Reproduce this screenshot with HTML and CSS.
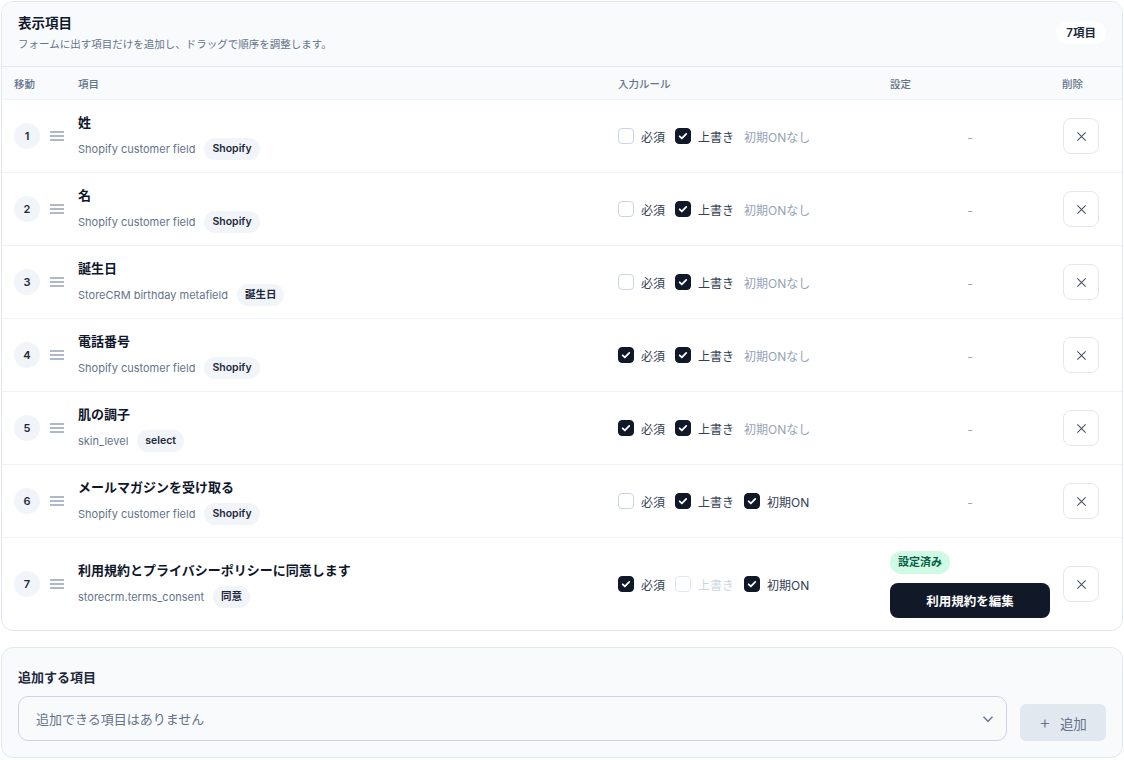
FILE: index.html
```html
<!DOCTYPE html>
<html lang="ja">
<head>
    <meta charset="UTF-8">
    <meta name="viewport" content="width=device-width, initial-scale=1.0">
    <title>表示項目</title>
    <link rel="stylesheet" href="styles.css">
</head>
<body>
    <div class="panel">
        <div class="panel-head">
            <div>
                <h2>表示項目</h2>
                <p>フォームに出す項目だけを追加し、ドラッグで順序を調整します。</p>
            </div>
            <span class="count">7項目</span>
        </div>

        <div class="row head-row">
            <div>移動</div>
            <div>項目</div>
            <div>入力ルール</div>
            <div>設定</div>
            <div>削除</div>
        </div>

        <div class="row item">
            <div class="move"><span class="num">1</span><svg class="grip" viewBox="0 0 14 10"><path d="M0 1h14M0 5h14M0 9h14"/></svg></div>
            <div class="field">
                <div class="field-name">姓</div>
                <div class="field-meta"><span>Shopify customer field</span><span class="tag">Shopify</span></div>
            </div>
            <div class="rules">
                <label class="rule"><span class="box"></span>必須</label>
                <label class="rule"><span class="box on"><svg viewBox="0 0 16 16"><path d="M4.2 8.3l2.5 2.5 5-5.2"/></svg></span>上書き</label>
                <span class="note">初期ONなし</span>
            </div>
            <div class="setting"><span class="dash">-</span></div>
            <div><button class="del-btn"><svg viewBox="0 0 12 12"><path d="M1.5 1.5l9 9M10.5 1.5l-9 9"/></svg></button></div>
        </div>

        <div class="row item">
            <div class="move"><span class="num">2</span><svg class="grip" viewBox="0 0 14 10"><path d="M0 1h14M0 5h14M0 9h14"/></svg></div>
            <div class="field">
                <div class="field-name">名</div>
                <div class="field-meta"><span>Shopify customer field</span><span class="tag">Shopify</span></div>
            </div>
            <div class="rules">
                <label class="rule"><span class="box"></span>必須</label>
                <label class="rule"><span class="box on"><svg viewBox="0 0 16 16"><path d="M4.2 8.3l2.5 2.5 5-5.2"/></svg></span>上書き</label>
                <span class="note">初期ONなし</span>
            </div>
            <div class="setting"><span class="dash">-</span></div>
            <div><button class="del-btn"><svg viewBox="0 0 12 12"><path d="M1.5 1.5l9 9M10.5 1.5l-9 9"/></svg></button></div>
        </div>

        <div class="row item">
            <div class="move"><span class="num">3</span><svg class="grip" viewBox="0 0 14 10"><path d="M0 1h14M0 5h14M0 9h14"/></svg></div>
            <div class="field">
                <div class="field-name">誕生日</div>
                <div class="field-meta"><span>StoreCRM birthday metafield</span><span class="tag">誕生日</span></div>
            </div>
            <div class="rules">
                <label class="rule"><span class="box"></span>必須</label>
                <label class="rule"><span class="box on"><svg viewBox="0 0 16 16"><path d="M4.2 8.3l2.5 2.5 5-5.2"/></svg></span>上書き</label>
                <span class="note">初期ONなし</span>
            </div>
            <div class="setting"><span class="dash">-</span></div>
            <div><button class="del-btn"><svg viewBox="0 0 12 12"><path d="M1.5 1.5l9 9M10.5 1.5l-9 9"/></svg></button></div>
        </div>

        <div class="row item">
            <div class="move"><span class="num">4</span><svg class="grip" viewBox="0 0 14 10"><path d="M0 1h14M0 5h14M0 9h14"/></svg></div>
            <div class="field">
                <div class="field-name">電話番号</div>
                <div class="field-meta"><span>Shopify customer field</span><span class="tag">Shopify</span></div>
            </div>
            <div class="rules">
                <label class="rule"><span class="box on"><svg viewBox="0 0 16 16"><path d="M4.2 8.3l2.5 2.5 5-5.2"/></svg></span>必須</label>
                <label class="rule"><span class="box on"><svg viewBox="0 0 16 16"><path d="M4.2 8.3l2.5 2.5 5-5.2"/></svg></span>上書き</label>
                <span class="note">初期ONなし</span>
            </div>
            <div class="setting"><span class="dash">-</span></div>
            <div><button class="del-btn"><svg viewBox="0 0 12 12"><path d="M1.5 1.5l9 9M10.5 1.5l-9 9"/></svg></button></div>
        </div>

        <div class="row item">
            <div class="move"><span class="num">5</span><svg class="grip" viewBox="0 0 14 10"><path d="M0 1h14M0 5h14M0 9h14"/></svg></div>
            <div class="field">
                <div class="field-name">肌の調子</div>
                <div class="field-meta"><span>skin_level</span><span class="tag">select</span></div>
            </div>
            <div class="rules">
                <label class="rule"><span class="box on"><svg viewBox="0 0 16 16"><path d="M4.2 8.3l2.5 2.5 5-5.2"/></svg></span>必須</label>
                <label class="rule"><span class="box on"><svg viewBox="0 0 16 16"><path d="M4.2 8.3l2.5 2.5 5-5.2"/></svg></span>上書き</label>
                <span class="note">初期ONなし</span>
            </div>
            <div class="setting"><span class="dash">-</span></div>
            <div><button class="del-btn"><svg viewBox="0 0 12 12"><path d="M1.5 1.5l9 9M10.5 1.5l-9 9"/></svg></button></div>
        </div>

        <div class="row item">
            <div class="move"><span class="num">6</span><svg class="grip" viewBox="0 0 14 10"><path d="M0 1h14M0 5h14M0 9h14"/></svg></div>
            <div class="field">
                <div class="field-name">メールマガジンを受け取る</div>
                <div class="field-meta"><span>Shopify customer field</span><span class="tag">Shopify</span></div>
            </div>
            <div class="rules">
                <label class="rule"><span class="box"></span>必須</label>
                <label class="rule"><span class="box on"><svg viewBox="0 0 16 16"><path d="M4.2 8.3l2.5 2.5 5-5.2"/></svg></span>上書き</label>
                <label class="rule"><span class="box on"><svg viewBox="0 0 16 16"><path d="M4.2 8.3l2.5 2.5 5-5.2"/></svg></span>初期ON</label>
            </div>
            <div class="setting"><span class="dash">-</span></div>
            <div><button class="del-btn"><svg viewBox="0 0 12 12"><path d="M1.5 1.5l9 9M10.5 1.5l-9 9"/></svg></button></div>
        </div>

        <div class="row item last">
            <div class="move"><span class="num">7</span><svg class="grip" viewBox="0 0 14 10"><path d="M0 1h14M0 5h14M0 9h14"/></svg></div>
            <div class="field">
                <div class="field-name">利用規約とプライバシーポリシーに同意します</div>
                <div class="field-meta"><span>storecrm.terms_consent</span><span class="tag">同意</span></div>
            </div>
            <div class="rules">
                <label class="rule"><span class="box on"><svg viewBox="0 0 16 16"><path d="M4.2 8.3l2.5 2.5 5-5.2"/></svg></span>必須</label>
                <label class="rule disabled"><span class="box"></span>上書き</label>
                <label class="rule"><span class="box on"><svg viewBox="0 0 16 16"><path d="M4.2 8.3l2.5 2.5 5-5.2"/></svg></span>初期ON</label>
            </div>
            <div class="setting stack">
                <span class="done">設定済み</span>
                <button class="edit-btn">利用規約を編集</button>
            </div>
            <div><button class="del-btn"><svg viewBox="0 0 12 12"><path d="M1.5 1.5l9 9M10.5 1.5l-9 9"/></svg></button></div>
        </div>
    </div>

    <div class="add-panel">
        <h3>追加する項目</h3>
        <div class="add-row">
            <div class="select">
                <span>追加できる項目はありません</span>
                <svg class="chev" viewBox="0 0 12 8"><path d="M1.5 1.8l4.5 4.4 4.5-4.4"/></svg>
            </div>
            <button class="add-btn"><span class="plus">+</span>追加</button>
        </div>
    </div>
</body>
</html>
```

FILE: styles.css
```css
body {
    margin: 0;
    padding: 1px;
    background: #ffffff;
    color: #0f172a;
    font-family: Inter, "Noto Sans CJK JP", sans-serif;
}

.panel {
    border: 1px solid #e2e8f0;
    border-radius: 12px;
    background: #ffffff;
    overflow: hidden;
}

.panel-head {
    display: flex;
    justify-content: space-between;
    align-items: center;
    padding: 11px 16px 13px;
    background: #f8fafc;
    border-bottom: 1px solid #e2e8f0;
}
.panel-head h2 {
    margin: 0;
    font-size: 13.5px;
    line-height: 20px;
    font-weight: 700;
    color: #0f172a;
}
.panel-head p {
    margin: 4px 0 0;
    font-size: 10.5px;
    line-height: 16px;
    color: #64748b;
}
.count {
    background: #ffffff;
    border-radius: 999px;
    padding: 0 10px;
    height: 22px;
    line-height: 22px;
    font-size: 11.5px;
    font-weight: 600;
    color: #1e293b;
}

.row {
    display: grid;
    grid-template-columns: 64px 1fr 272px 172px 48px;
    align-items: center;
    padding: 0 12px;
}
.head-row {
    height: 32px;
    background: #f8fafc;
    border-bottom: 1px solid #eef2f6;
    font-size: 10.5px;
    font-weight: 500;
    color: #64748b;
}
.item {
    min-height: 73px;
    box-sizing: border-box;
    padding-top: 12px;
    padding-bottom: 12px;
    border-bottom: 1px solid #eef2f6;
}
.item.last {
    border-bottom: none;
    min-height: 92px;
}

.move {
    display: flex;
    align-items: center;
    gap: 10px;
}
.num {
    width: 26px;
    height: 26px;
    border-radius: 50%;
    background: #f1f5f9;
    display: flex;
    align-items: center;
    justify-content: center;
    font-size: 11px;
    font-weight: 600;
    color: #1e293b;
}
.grip {
    width: 14px;
    height: 10px;
    fill: none;
    stroke: #94a3b8;
    stroke-width: 1.5;
}

.field-name {
    font-size: 13px;
    line-height: 18px;
    font-weight: 700;
    color: #0f172a;
}
.field-meta {
    display: flex;
    align-items: center;
    gap: 9px;
    margin-top: 7px;
    font-size: 11px;
    color: #64748b;
}
.tag {
    height: 22px;
    line-height: 22px;
    padding: 0 8px;
    border-radius: 999px;
    background: #f1f5f9;
    color: #1e293b;
    font-size: 10.5px;
    font-weight: 600;
}

.rules {
    display: flex;
    align-items: center;
    gap: 10px;
    font-size: 12px;
    color: #334155;
}
.rule {
    display: flex;
    align-items: center;
    gap: 7px;
}
.box {
    width: 16px;
    height: 16px;
    box-sizing: border-box;
    border: 1px solid #cbd5e1;
    border-radius: 4px;
    background: #ffffff;
    display: flex;
}
.box.on {
    background: #111827;
    border-color: #111827;
}
.box svg {
    width: 14px;
    height: 14px;
    fill: none;
    stroke: #ffffff;
    stroke-width: 2;
    stroke-linecap: round;
    stroke-linejoin: round;
}
.rule.disabled {
    color: #cbd5e1;
}
.rule.disabled .box {
    border-color: #e2e8f0;
}
.note {
    color: #94a3b8;
}

.setting {
    width: 160px;
    text-align: center;
}
.dash {
    font-size: 12px;
    color: #94a3b8;
}
.stack {
    display: flex;
    flex-direction: column;
    align-items: flex-start;
    gap: 9px;
}
.done {
    height: 23px;
    line-height: 23px;
    padding: 0 8px;
    border-radius: 999px;
    background: #d1fae5;
    color: #065f46;
    font-size: 11px;
    font-weight: 700;
}
.edit-btn {
    width: 160px;
    height: 35px;
    border: none;
    border-radius: 8px;
    background: #111827;
    color: #ffffff;
    font-family: inherit;
    font-size: 12.5px;
    font-weight: 700;
}

.del-btn {
    width: 36px;
    height: 36px;
    border: 1px solid #e2e8f0;
    border-radius: 8px;
    background: #ffffff;
    display: flex;
    align-items: center;
    justify-content: center;
    padding: 0;
    margin-left: 1px;
}
.del-btn svg {
    width: 11px;
    height: 11px;
    fill: none;
    stroke: #475569;
    stroke-width: 1.2;
}

.add-panel {
    margin-top: 16px;
    border: 1px solid #e2e8f0;
    border-radius: 12px;
    background: #f8fafc;
    padding: 19px 16px 16px;
}
.add-panel h3 {
    margin: 0 0 9px;
    font-size: 13px;
    line-height: 20px;
    font-weight: 700;
    color: #1e293b;
}
.add-row {
    display: flex;
    align-items: flex-end;
    gap: 13px;
}
.select {
    flex: 1;
    height: 45px;
    box-sizing: border-box;
    border: 1px solid #cbd5e1;
    border-radius: 10px;
    background: #f8fafc;
    display: flex;
    align-items: center;
    justify-content: space-between;
    padding: 0 12px 0 17px;
    font-size: 13px;
    color: #64748b;
}
.chev {
    width: 12px;
    height: 8px;
    fill: none;
    stroke: #64748b;
    stroke-width: 1.4;
}
.add-btn {
    width: 86px;
    height: 37px;
    border: none;
    border-radius: 6px;
    background: #e2e8f0;
    color: #64748b;
    font-family: inherit;
    font-size: 13.5px;
    display: flex;
    align-items: center;
    justify-content: center;
    gap: 9px;
}
.plus {
    font-size: 18px;
    font-weight: 300;
    line-height: 1;
}
```
